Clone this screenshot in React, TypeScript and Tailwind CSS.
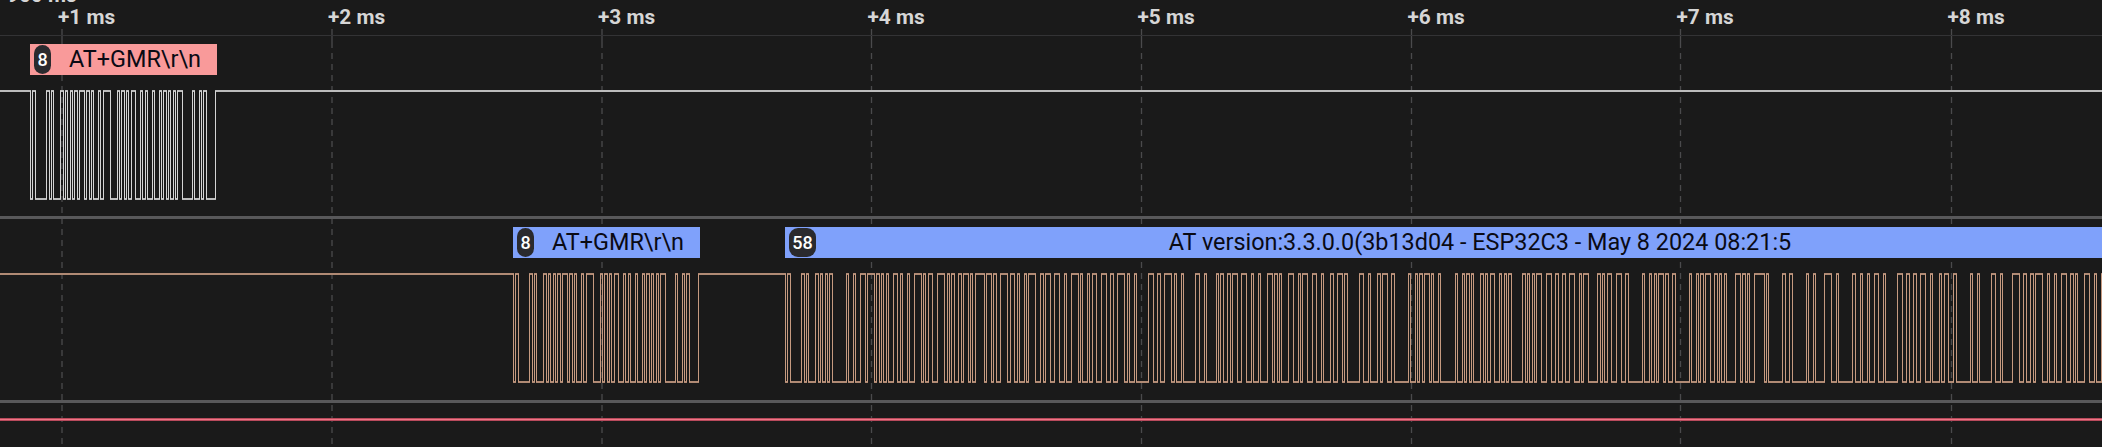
const FONT = "font-['Roboto',sans-serif]";

// one UART bit at 115200 baud on this time scale
const BIT = 2.341;
const TICKS = [62, 332, 602, 871.5, 1141.5, 1411.5, 1680.5, 1951.5];
const HIGH = 16;
const LOW = 124;

type Frame = { start: number; text: string };

// 8N1, LSB first, idle high. Returns the edge positions (snapped to pixels) and spans at each level.
function traceFrames(frames: Frame[], width: number) {
  let edges = "";
  let flats = "";
  let level = 1;
  let last = 0;
  const to = (x: number, next: number) => {
    if (next === level) return;
    const nx = Math.round(x) + 0.5;
    flats += `M${last - 0.5} ${level ? HIGH : LOW} L${nx + 0.5} ${level ? HIGH : LOW} `;
    edges += `M${nx} ${HIGH} L${nx} ${LOW} `;
    last = nx;
    level = next;
  };
  for (const frame of frames) {
    let bit = 0;
    for (const ch of frame.text) {
      const code = ch.charCodeAt(0);
      to(frame.start + bit * BIT, 0);
      for (let i = 0; i < 8; i++) {
        to(frame.start + (bit + 1 + i) * BIT, (code >> i) & 1);
      }
      to(frame.start + (bit + 9) * BIT, 1);
      bit += 10;
    }
  }
  flats += `M${last - 0.5} ${level ? HIGH : LOW} L${width} ${level ? HIGH : LOW}`;
  return { edges, flats };
}

function Wave({ frames, edge, flat }: { frames: Frame[]; edge: string; flat: string }) {
  const { edges, flats } = traceFrames(frames, 2102);
  return (
    <svg width={2102} height={141} className="block" fill="none" aria-hidden="true">
      <path d={flats} stroke={flat} strokeWidth={2} />
      <path d={edges} stroke={edge} strokeWidth={1} />
    </svg>
  );
}

function Badge({ n, wide }: { n: string; wide?: boolean }) {
  return (
    <span
      className={`flex h-[29px] flex-none items-center justify-center rounded-[9px] bg-[#2a2a2e] text-[18px] font-medium text-white ${
        wide ? "w-[27px]" : "w-[17px]"
      }`}
    >
      {n}
    </span>
  );
}

function Packet({
  n,
  text,
  bg,
  width,
  wide,
  className = "",
}: {
  n: string;
  text: string;
  bg: string;
  width: string;
  wide?: boolean;
  className?: string;
}) {
  return (
    <div className={`flex h-[31px] flex-none items-center pl-1 ${bg} ${width} ${className}`}>
      <Badge n={n} wide={wide} />
      <span className="flex-1 whitespace-nowrap pl-[2px] text-center text-[23.4px] text-[#0a0a14]">{text}</span>
    </div>
  );
}

export default function App() {
  return (
    <div className={`relative h-[447px] w-[2102px] overflow-hidden bg-[#1a1a1a] ${FONT}`}>
      {/* dashed grid, sits behind the rows */}
      <svg className="absolute inset-0" width={2102} height={447} aria-hidden="true">
        {TICKS.map((x) => (
          <g key={x} stroke="#4a4a4c" strokeWidth={1.3}>
            <line x1={x} x2={x} y1={29} y2={42} />
            <line x1={x} x2={x} y1={42} y2={447} strokeDasharray="6 5" />
          </g>
        ))}
      </svg>

      {/* axis */}
      <div className="relative h-[36px] border-b border-[#333335] text-[20.8px] leading-[24px] font-bold text-[#d6d6d6]">
        <span className="absolute left-[7px] top-[-17px] whitespace-nowrap">900 ms</span>
        {["+1 ms", "+2 ms", "+3 ms", "+4 ms", "+5 ms", "+6 ms", "+7 ms", "+8 ms"].map((label, i) => (
          <span
            key={label}
            className="absolute top-[5px] whitespace-nowrap"
            style={{ left: TICKS[i] - 4 }}
          >
            {label}
          </span>
        ))}
      </div>

      {/* TX */}
      <div className="relative h-[183px] border-b-[3px] border-[#58585a] pt-[8px]">
        <div className="flex">
          <Packet n="8" text="AT+GMR\r\n" bg="bg-[#f99a9a]" width="w-[187px]" className="ml-[30px]" />
        </div>
        <Wave edge="#d4d4d4" flat="#bcbcbc" frames={[{ start: 30, text: "AT+GMR\r\n" }]} />
      </div>

      {/* RX */}
      <div className="relative h-[184px] border-b-[3px] border-[#58585a] pt-[8px]">
        <div className="flex">
          <Packet n="8" text="AT+GMR\r\n" bg="bg-[#7fa1fb]" width="w-[187px]" className="ml-[513px]" />
          <Packet
            n="58"
            wide
            text="AT version:3.3.0.0(3b13d04 - ESP32C3 - May  8 2024 08:21:5"
            bg="bg-[#7fa1fb]"
            width="w-[1357px]"
            className="ml-[85px]"
          />
        </div>
        <Wave
          edge="#c69a80"
          flat="#b08a74"
          frames={[
            { start: 513, text: "AT+GMR\r\n" },
            { start: 785, text: "AT version:3.3.0.0(3b13d04 - ESP32C3 - May  8 2024 08:21:53)\r\n" },
          ]}
        />
      </div>

      {/* marker line */}
      <div className="relative mt-[15px] h-[3px] border-y border-[#b84a5c] bg-[#ef7585]" />
    </div>
  );
}
